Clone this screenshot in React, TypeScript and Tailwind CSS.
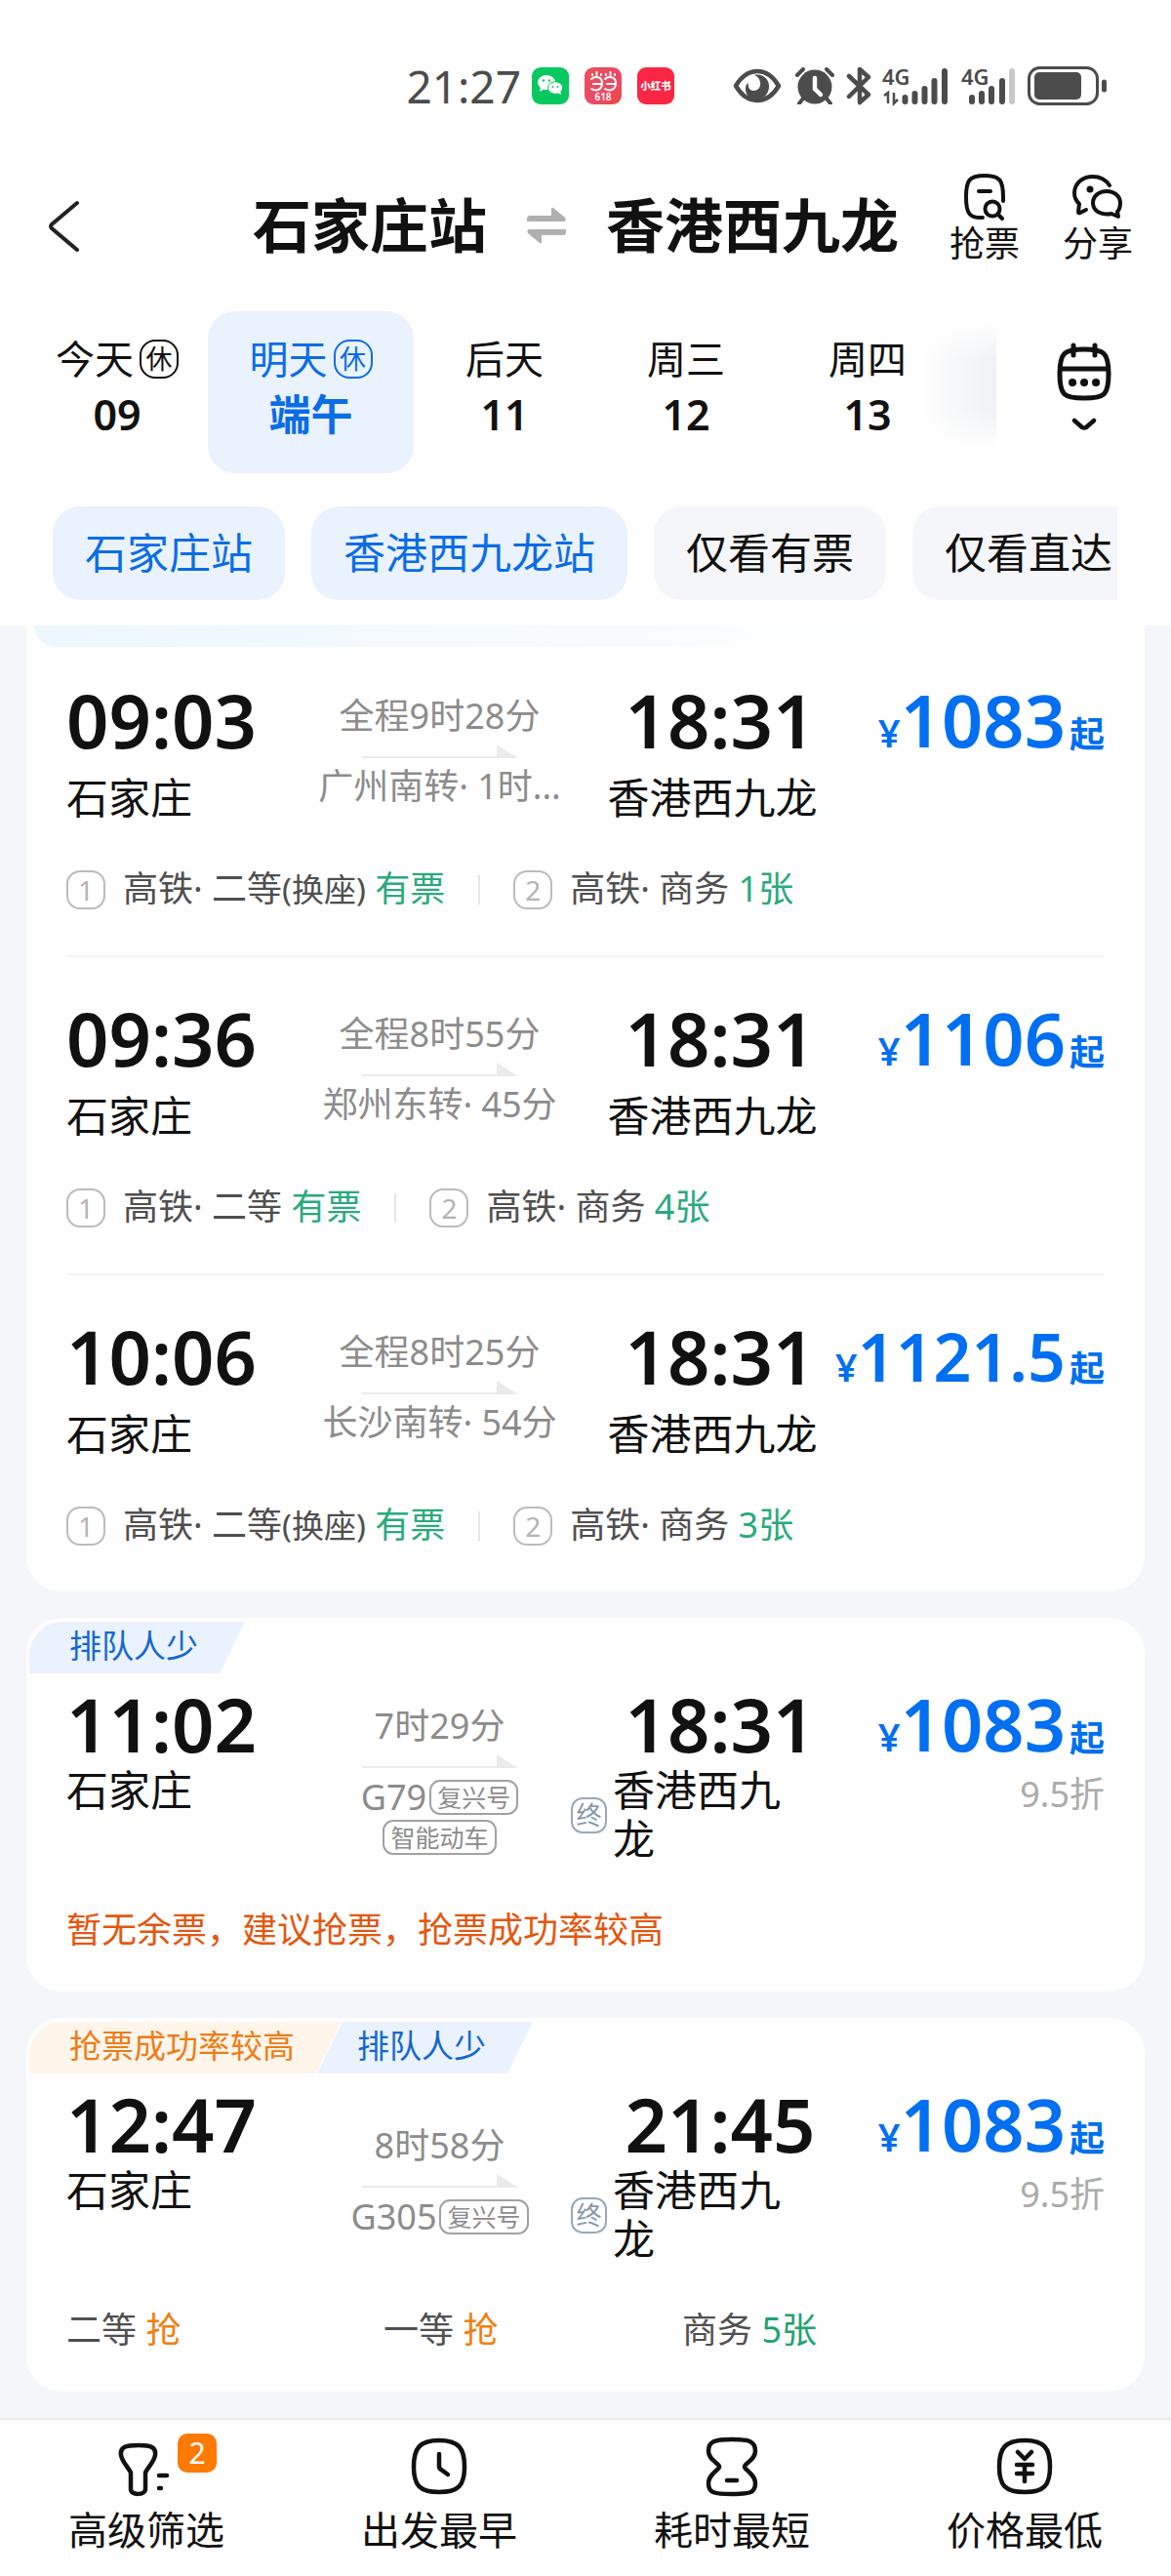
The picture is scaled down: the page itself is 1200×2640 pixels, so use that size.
import React, { useState } from "react";

type Seat = { name: string; note?: string; left: string };

type Transfer = {
  depart: string;
  arrive: string;
  duration: string;
  via: string;
  price: string;
  seats: Seat[];
};

type Tag = { text: string; tone: "blue" | "orange" };

type Direct = {
  depart: string;
  arrive: string;
  duration: string;
  train: string;
  models: string[];
  price: string;
  tags: Tag[];
  children: React.ReactNode;
};

const transfers: Transfer[] = [
  {
    depart: "09:03",
    arrive: "18:31",
    duration: "全程9时28分",
    via: "广州南转· 1时...",
    price: "1083",
    seats: [
      { name: "高铁· 二等", note: "(换座)", left: "有票" },
      { name: "高铁· 商务", left: "1张" },
    ],
  },
  {
    depart: "09:36",
    arrive: "18:31",
    duration: "全程8时55分",
    via: "郑州东转· 45分",
    price: "1106",
    seats: [
      { name: "高铁· 二等", left: "有票" },
      { name: "高铁· 商务", left: "4张" },
    ],
  },
  {
    depart: "10:06",
    arrive: "18:31",
    duration: "全程8时25分",
    via: "长沙南转· 54分",
    price: "1121.5",
    seats: [
      { name: "高铁· 二等", note: "(换座)", left: "有票" },
      { name: "高铁· 商务", left: "3张" },
    ],
  },
];

const days = [
  { label: "今天", date: "09", rest: true },
  { label: "明天", date: "端午", rest: true },
  { label: "后天", date: "11", rest: false },
  { label: "周三", date: "12", rest: false },
  { label: "周四", date: "13", rest: false },
];

const filters = ["石家庄站", "香港西九龙站", "仅看有票", "仅看直达"];

const App = () => {
  return (
    <div className="min-h-screen overflow-hidden bg-[#f4f6fa] text-[#111111] font-['Noto_Sans','Noto_Sans_CJK_SC',sans-serif]">
      <header className="bg-white pb-[26px]">
        <StatusBar />
        <TitleBar />
        <DateStrip />
        <FilterChips />
      </header>

      <main className="px-[27px]">
        <section className="bg-white rounded-b-[36px]">
          <div className="ml-2 h-[22px] rounded-bl-[28px] bg-linear-to-r from-[#edf7fe] to-white to-80%"></div>
          <div className="-mt-[10px] px-[41px]">
            {transfers.map((item, i) => (
              <TransferRow key={item.depart} item={item} first={i === 0} />
            ))}
          </div>
        </section>

        <DirectCard
          depart="11:02"
          arrive="18:31"
          duration="7时29分"
          train="G79"
          models={["复兴号", "智能动车"]}
          price="1083"
          tags={[{ text: "排队人少", tone: "blue" }]}
        >
          <p className="text-[#e4570f]">
            暂无余票，建议抢票，抢票成功率较高
          </p>
        </DirectCard>

        <DirectCard
          depart="12:47"
          arrive="21:45"
          duration="8时58分"
          train="G305"
          models={["复兴号"]}
          price="1083"
          tags={[
            { text: "抢票成功率较高", tone: "orange" },
            { text: "排队人少", tone: "blue" },
          ]}
        >
          <div className="grid grid-cols-[325fr_306fr_433fr] text-[#505050]">
            <p>
              二等 <span className="text-[#f08010]">抢</span>
            </p>
            <p>
              一等 <span className="text-[#f08010]">抢</span>
            </p>
            <p>
              商务 <span className="text-[#1fa371]">5张</span>
            </p>
          </div>
        </DirectCard>
      </main>

      <BottomBar />
    </div>
  );
};

const StatusBar = () => {
  return (
    <div className="flex items-center justify-end h-[116px] pt-[60px] pr-[65px] text-[#4c4c4c]">
      <span className="text-[46px] leading-[56px] mr-[11px]">21:27</span>
      <div className="flex items-center gap-4 mr-[60px]">
        <WechatLogo />
        <DangdangLogo />
        <RednoteLogo />
      </div>
      <svg width="50" height="38" viewBox="0 0 50 38" className="mr-[13px]">
        <path
          d="M3 19C9 9 17 4 25 4s16 5 22 15c-6 10-14 15-22 15S9 29 3 19z"
          fill="none"
          stroke="currentColor"
          strokeWidth="4.5"
          strokeLinejoin="round"
        />
        <path
          d="M22 8c8-2 16 4 15 13-1 8-7 12-13 12-7 0-11-5-11-11 0-3 1-5 3-6-1 5 2 8 5 8 5 0 8-4 7-9-1-4-3-6-6-7z"
          fill="currentColor"
        />
      </svg>
      <svg width="42" height="38" viewBox="0 0 42 38" className="mr-[11px]">
        <circle cx="21" cy="20" r="17.5" fill="currentColor" />
        <path
          d="M3 8l6-6M39 8l-6-6M9 32l-4 5M33 32l4 5"
          stroke="currentColor"
          strokeWidth="4"
          strokeLinecap="round"
        />
        <path
          d="M21 11v11l6 6"
          fill="none"
          stroke="#fff"
          strokeWidth="4.5"
          strokeLinecap="round"
        />
      </svg>
      <svg width="26" height="40" viewBox="0 0 26 40" className="mr-[11px]">
        <path
          d="M3 10l20 19-9 8V3l9 8L3 31"
          fill="none"
          stroke="currentColor"
          strokeWidth="4.5"
          strokeLinejoin="round"
          strokeLinecap="round"
        />
      </svg>
      <svg
        width="70"
        height="40"
        viewBox="0 0 70 40"
        className="mr-[11px] overflow-visible"
      >
        <text
          x="0"
          y="19"
          fontSize="22"
          fontWeight="600"
          fill="currentColor"
        >
          4G
        </text>
        <path
          d="M2 30l4-3v11M12 27v11l4-4"
          fill="none"
          stroke="currentColor"
          strokeWidth="2.5"
        />
        <path
          d="M23.5 32v4M33.5 28v8M43.5 23v13M53.5 15v21M64 5v31"
          stroke="currentColor"
          strokeWidth="6"
          strokeLinecap="round"
        />
      </svg>
      <svg
        width="58"
        height="40"
        viewBox="0 0 58 40"
        className="mr-[10px] overflow-visible"
      >
        <text
          x="0"
          y="19"
          fontSize="22"
          fontWeight="600"
          fill="currentColor"
        >
          4G
        </text>
        <path
          d="M11 32v4M21 28v8M31 23v13M42 15v21"
          stroke="currentColor"
          strokeWidth="6"
          strokeLinecap="round"
        />
        <path
          d="M52 5v31"
          stroke="#c9c9c9"
          strokeWidth="6"
          strokeLinecap="round"
        />
      </svg>
      <svg width="82" height="40" viewBox="0 0 82 40">
        <rect
          x="1.5"
          y="1.5"
          width="70"
          height="37"
          rx="11"
          fill="none"
          stroke="currentColor"
          strokeWidth="3"
        />
        <rect x="7" y="6" width="48" height="28" rx="5" fill="currentColor" />
        <path
          d="M78.5 16v8"
          stroke="currentColor"
          strokeWidth="5"
          strokeLinecap="round"
        />
      </svg>
    </div>
  );
};

const WechatLogo = () => (
  <svg width="38" height="38" viewBox="0 0 38 38">
    <rect width="38" height="38" rx="9" fill="#07c95f" />
    <ellipse cx="15" cy="15.5" rx="9" ry="7.5" fill="#fff" />
    <path d="M9 20l-1 5 5-3z" fill="#fff" />
    <ellipse
      cx="24"
      cy="21"
      rx="7.5"
      ry="6.3"
      fill="#fff"
      stroke="#07c95f"
      strokeWidth="1"
    />
    <path d="M26 26l4 2-1-4z" fill="#fff" />
    <circle cx="12" cy="13.5" r="1.2" fill="#07c95f" />
    <circle cx="18" cy="13.5" r="1.2" fill="#07c95f" />
    <circle cx="21.5" cy="20" r="1" fill="#07c95f" />
    <circle cx="26.5" cy="20" r="1" fill="#07c95f" />
  </svg>
);

const DangdangLogo = () => (
  <svg width="38" height="38" viewBox="0 0 38 38">
    <defs>
      <linearGradient id="dd" x1="0" y1="0" x2="1" y2="1">
        <stop offset="0" stopColor="#e8505a" />
        <stop offset="0.6" stopColor="#ea4a68" />
        <stop offset="1" stopColor="#f04a3c" />
      </linearGradient>
    </defs>
    <rect width="38" height="38" rx="9" fill="url(#dd)" />
    <g fill="none" stroke="#fff" strokeWidth="2" strokeLinecap="round">
      <path d="M7 12c3-3 11-3 11 4s-6 9-11 6M9 17h8" />
      <path d="M21 12c3-3 11-3 11 4s-6 9-11 6M23 17h8" />
      <path d="M8 7v1M12.5 5v3M17 7v1M22 7v1M26.5 5v3M31 7v1" />
    </g>
    <text
      x="19"
      y="34"
      fontSize="10"
      fontWeight="600"
      textAnchor="middle"
      fill="#fff"
    >
      618
    </text>
  </svg>
);

const RednoteLogo = () => (
  <svg width="38" height="38" viewBox="0 0 38 38">
    <rect width="38" height="38" rx="9" fill="#fb2544" />
    <text
      x="19"
      y="23"
      fontSize="10.5"
      fontWeight="900"
      textAnchor="middle"
      fill="#fff"
    >
      小红书
    </text>
  </svg>
);

const TitleBar = () => {
  return (
    <div className="flex items-center h-[96px] mt-[60px] pl-[48px] pr-[39px]">
      <button aria-label="返回" className="pt-[16px]">
        <svg width="34" height="56" viewBox="0 0 34 56">
          <path
            d="M31 4L5 26q-2 2 0 4l26 22"
            fill="none"
            stroke="#222"
            strokeWidth="4"
            strokeLinecap="round"
          />
        </svg>
      </button>
      <h1 className="flex items-center ml-auto pt-[14px] gap-10 text-[60px] leading-[80px] font-bold whitespace-nowrap">
        <span>石家庄站</span>
        <svg width="42" height="38" viewBox="0 0 42 38" fill="#b0b0b0">
          <path d="M1 15V12q0-3 3-3h22V2q0-2 2-1l12 10q2 4-2 4z" />
          <path d="M41 23v3q0 3-3 3H16v7q0 2-2 1L2 27q-2-4 2-4z" />
        </svg>
        <span>香港西九龙</span>
      </h1>
      <div className="flex gap-[44px] ml-[52px] text-[36px] leading-[40px]">
        <button className="flex flex-col items-center gap-1">
          <svg
            width="44"
            height="48"
            viewBox="0 0 44 48"
            fill="none"
            stroke="#111"
            strokeWidth="4"
            strokeLinecap="round"
          >
            <path d="M20 45C6 46 3 40 3 24 3 7 6 2 22 2s19 5 19 22v4" />
            <path d="M16 18h12" />
            <circle cx="30" cy="36" r="7.5" />
            <path d="M36 42l4 4" />
          </svg>
          抢票
        </button>
        <button className="flex flex-col items-center gap-1">
          <svg
            width="54"
            height="48"
            viewBox="0 0 54 48"
            fill="none"
            stroke="#111"
            strokeWidth="4"
            strokeLinecap="round"
            strokeLinejoin="round"
          >
            <path d="M39 12C35 6 29 3 22 3 11 3 3 10 3 20c0 4 2 8 5 11l-1 8q0 2 2 1l6-3" />
            <path d="M36 18c8 0 14 5 14 12 0 4-1 7-3 9l1 5-7-3c-11 2-19-3-19-11 0-7 6-12 14-12z" />
            <circle cx="19" cy="16" r="2.5" fill="#111" strokeWidth="2" />
          </svg>
          分享
        </button>
      </div>
    </div>
  );
};

const DateStrip = () => {
  const [active, setActive] = useState("明天");

  return (
    <div className="flex mt-[47px] pl-[27px]">
      <div className="relative flex-1 grid grid-cols-[186fr_211fr_186fr_186fr_186fr_39fr]">
        {days.map((day) => {
          const selected = day.label === active;
          return (
            <button
              key={day.label}
              onClick={() => setActive(day.label)}
              className={`flex flex-col items-center h-[166px] pt-[22px] rounded-[28px] text-[40px] leading-[54px] ${
                selected ? "bg-[#eaf2fe] text-[#0b6de6]" : ""
              }`}
            >
              <span className="flex items-center gap-[6px]">
                {day.label}
                {day.rest && (
                  <span className="flex items-center justify-center size-10 rounded-[16px] border-2 border-current text-[27px] leading-[36px]">
                    休
                  </span>
                )}
              </span>
              <span
                className={
                  selected
                    ? "text-[43px] leading-[60px] font-bold"
                    : "text-[43px] leading-[60px] font-semibold"
                }
              >
                {day.date}
              </span>
            </button>
          );
        })}
        <div className="absolute right-0 top-3 h-[128px] w-[80px] bg-linear-to-r from-white/0 to-[#eff1f4] [mask-image:linear-gradient(transparent,black_30%,black_70%,transparent)]"></div>
      </div>
      <button
        aria-label="选择日期"
        className="flex flex-col items-center gap-[17px] w-[179px] pt-[32px]"
      >
        <svg
          width="56"
          height="60"
          viewBox="0 0 56 60"
          fill="none"
          stroke="#111"
          strokeWidth="5"
          strokeLinecap="round"
        >
          <path d="M28 7c20 0 25 3 25 25s-4 25-25 25S3 54 3 32 8 7 28 7z" />
          <path d="M4 27h48M17 3v10M39 3v10" />
          <path d="M16 41h.1M28 41h.1M40 41h.1" strokeWidth="8" />
        </svg>
        <svg width="26" height="14" viewBox="0 0 26 14">
          <path
            d="M3 3l8 7q2 1 4 0l8-7"
            fill="none"
            stroke="#111"
            strokeWidth="4.5"
            strokeLinecap="round"
          />
        </svg>
      </button>
    </div>
  );
};

const FilterChips = () => {
  return (
    <div className="flex gap-[27px] mt-[34px] ml-[54px] mr-[55px] overflow-hidden">
      {filters.map((name, i) => (
        <button
          key={name}
          className={`shrink-0 h-[96px] px-[33px] rounded-[28px] text-[43px] leading-[60px] ${
            i < 2 ? "bg-[#eaf2fe] text-[#0b6de6]" : "bg-[#f5f6f9]"
          }`}
        >
          {name}
        </button>
      ))}
    </div>
  );
};

const Arrow = () => (
  <svg
    width="160"
    height="14"
    viewBox="0 0 160 14"
    fill="#ebebeb"
    className="shrink-0"
  >
    <path d="M0 12h138V0l22 14H0z" />
  </svg>
);

const Price = ({ value }: { value: string }) => (
  <p className="flex items-baseline justify-end h-[78px] whitespace-nowrap text-[#006ff2] leading-[78px]">
    <span className="text-[40px] font-semibold">¥</span>
    <span
      className={
        value.length > 4
          ? "text-[68px] font-semibold"
          : "text-[74px] font-semibold"
      }
    >
      {value}
    </span>
    <span className="text-[36px] font-bold ml-1">起</span>
  </p>
);

const TransferRow = ({ item, first }: { item: Transfer; first: boolean }) => {
  return (
    <article
      className={`h-[326px] ${
        first ? "pt-[46px]" : "pt-[44px] border-t-2 border-[#f4f4f4]"
      }`}
    >
      <div className="grid grid-cols-[minmax(0,248fr)_minmax(0,269fr)_minmax(0,290fr)_minmax(0,257fr)]">
        <div>
          <p className="text-[76px] leading-[78px] font-semibold">
            {item.depart}
          </p>
          <p className="mt-4 text-[43px] leading-[50px]">石家庄</p>
        </div>
        <div className="flex flex-col items-center pt-[10px] text-[36px] leading-[50px] text-[#8c8c8c] whitespace-nowrap">
          <p>{item.duration}</p>
          <div className="pt-1 pb-1">
            <Arrow />
          </div>
          <p>{item.via}</p>
        </div>
        <div className="text-center">
          <p className="pl-4 text-[76px] leading-[78px] font-semibold">
            {item.arrive}
          </p>
          <p className="mt-4 text-[43px] leading-[50px]">香港西九龙</p>
        </div>
        <Price value={item.price} />
      </div>
      <div className="flex items-center mt-[43px] text-[36px] leading-[50px] text-[#4f4f4f]">
        {item.seats.map((seat, i) => (
          <React.Fragment key={seat.name}>
            {i > 0 && (
              <div className="w-[2px] h-[30px] mx-[34px] bg-[#e6e6e6]"></div>
            )}
            <span className="flex items-center justify-center size-10 mr-[18px] rounded-[14px] border-2 border-[#bcbcbc] text-[28px] leading-[36px] text-[#b4b4b4]">
              {i + 1}
            </span>
            <p>
              {seat.name}
              <span className="text-[33px]">{seat.note}</span>{" "}
              <span className="text-[#2aaa7d]">{seat.left}</span>
            </p>
          </React.Fragment>
        ))}
      </div>
    </article>
  );
};

const TagLabel = ({ tag, first }: { tag: Tag; first: boolean }) => (
  <span
    className={`h-[53px] pl-[41px] pr-[48px] text-[33px] leading-[50px] ${
      tag.tone === "blue"
        ? "bg-[#eaf2fe] text-[#1468cf]"
        : "bg-[#fff5eb] text-[#ee7d16]"
    } ${
      first
        ? "rounded-tl-[34px] [clip-path:polygon(0_0,100%_0,calc(100%-26px)_100%,0_100%)]"
        : "-ml-[25px] [clip-path:polygon(26px_0,100%_0,calc(100%-26px)_100%,0_100%)]"
    }`}
  >
    {tag.text}
  </span>
);

const DirectCard = ({
  depart,
  arrive,
  duration,
  train,
  models,
  price,
  tags,
  children,
}: Direct) => {
  return (
    <article className="mt-[27px] pb-[38px] bg-white rounded-[36px]">
      <div className="flex pt-1 pl-[3px]">
        {tags.map((tag, i) => (
          <TagLabel key={tag.text} tag={tag} first={i === 0} />
        ))}
      </div>
      <div className="grid grid-cols-[minmax(0,248fr)_minmax(0,269fr)_minmax(0,290fr)_minmax(0,257fr)] mt-[13px] px-[41px]">
        <div>
          <p className="text-[76px] leading-[78px] font-semibold">{depart}</p>
          <p className="mt-1 text-[43px] leading-[50px]">石家庄</p>
        </div>
        <div className="flex flex-col items-center justify-center pt-[6px] text-[36px] leading-[50px] text-[#8c8c8c]">
          <p>{duration}</p>
          <div className="pt-1 pb-3">
            <Arrow />
          </div>
          <div className="flex flex-wrap items-center justify-center gap-x-[3px] gap-y-[5px]">
            <span className="leading-[36px]">{train}</span>
            {models.map((model) => (
              <span
                key={model}
                className="h-[36px] px-[6px] rounded-[11px] border-2 border-[#a2a2a2] text-[25px] leading-[32px]"
              >
                {model}
              </span>
            ))}
          </div>
        </div>
        <div>
          <p className="pl-4 text-[76px] leading-[78px] font-semibold text-center">
            {arrive}
          </p>
          <div className="flex items-center mt-1 pr-[50px] text-[43px] leading-[50px]">
            <span className="shrink-0 flex items-center justify-center size-[37px] mr-[6px] rounded-[12px] border-2 border-[#9aa8b8] text-[26px] leading-[32px] text-[#8797aa]">
              终
            </span>
            <p>香港西九龙</p>
          </div>
        </div>
        <div>
          <Price value={price} />
          <p className="mt-2 text-right text-[36px] leading-[50px] text-[#ababab]">
            9.5折
          </p>
        </div>
      </div>
      <div className="mt-[43px] px-[41px] text-[36px] leading-[50px]">
        {children}
      </div>
    </article>
  );
};

const BottomBar = () => {
  return (
    <nav className="grid grid-cols-4 h-[162px] mt-[27px] pt-[17px] bg-white border-t-2 border-[#ececee] text-[40px] leading-[52px]">
      <button className="flex flex-col items-center gap-2">
        <span className="relative">
          <svg
            width="60"
            height="62"
            viewBox="0 0 60 62"
            fill="none"
            stroke="#111"
            strokeWidth="4.5"
            strokeLinecap="round"
            strokeLinejoin="round"
          >
            <path d="M22 9C8 9 3 11 4 19c1 7 7 12 10 18v17c0 7 15 6 15 0V37c3-6 9-11 10-18 1-8-4-10-17-10z" />
            <path d="M43 40h8M43 53h2" />
          </svg>
          <span className="absolute left-[62px] -top-[3px] size-10 rounded-[10px] bg-[#ff7a00] text-white text-[30px] leading-[40px]">
            2
          </span>
        </span>
        高级筛选
      </button>
      <button className="flex flex-col items-center gap-2">
        <svg
          width="60"
          height="62"
          viewBox="0 0 60 62"
          fill="none"
          stroke="#111"
          strokeWidth="4.5"
          strokeLinecap="round"
        >
          <path d="M30 4c20 0 26 8 26 27s-6 26-26 26S4 50 4 31 10 4 30 4z" />
          <path d="M30 18v12q0 3 2 4l7 5" />
        </svg>
        出发最早
      </button>
      <button className="flex flex-col items-center gap-2">
        <svg
          width="60"
          height="62"
          viewBox="0 0 60 62"
          fill="none"
          stroke="#111"
          strokeWidth="4.5"
          strokeLinecap="round"
          strokeLinejoin="round"
        >
          <path d="M30 3c18 0 24 2 24 12 0 7-6 10-10 14q-2 2 0 4c4 4 10 8 10 15 0 10-6 11-24 11S6 58 6 48c0-7 6-11 10-15q2-2 0-4C12 25 6 22 6 15 6 5 12 3 30 3z" />
          <path d="M25 45h10" />
        </svg>
        耗时最短
      </button>
      <button className="flex flex-col items-center gap-2">
        <svg
          width="60"
          height="62"
          viewBox="0 0 60 62"
          fill="none"
          stroke="#111"
          strokeWidth="4.5"
          strokeLinecap="round"
          strokeLinejoin="round"
        >
          <path d="M30 4c20 0 26 8 26 27s-6 26-26 26S4 50 4 31 10 4 30 4z" />
          <path d="M23 16l7 7 7-7M22 29h16M22 38h16M30 29v17" />
        </svg>
        价格最低
      </button>
    </nav>
  );
};

export default App;
